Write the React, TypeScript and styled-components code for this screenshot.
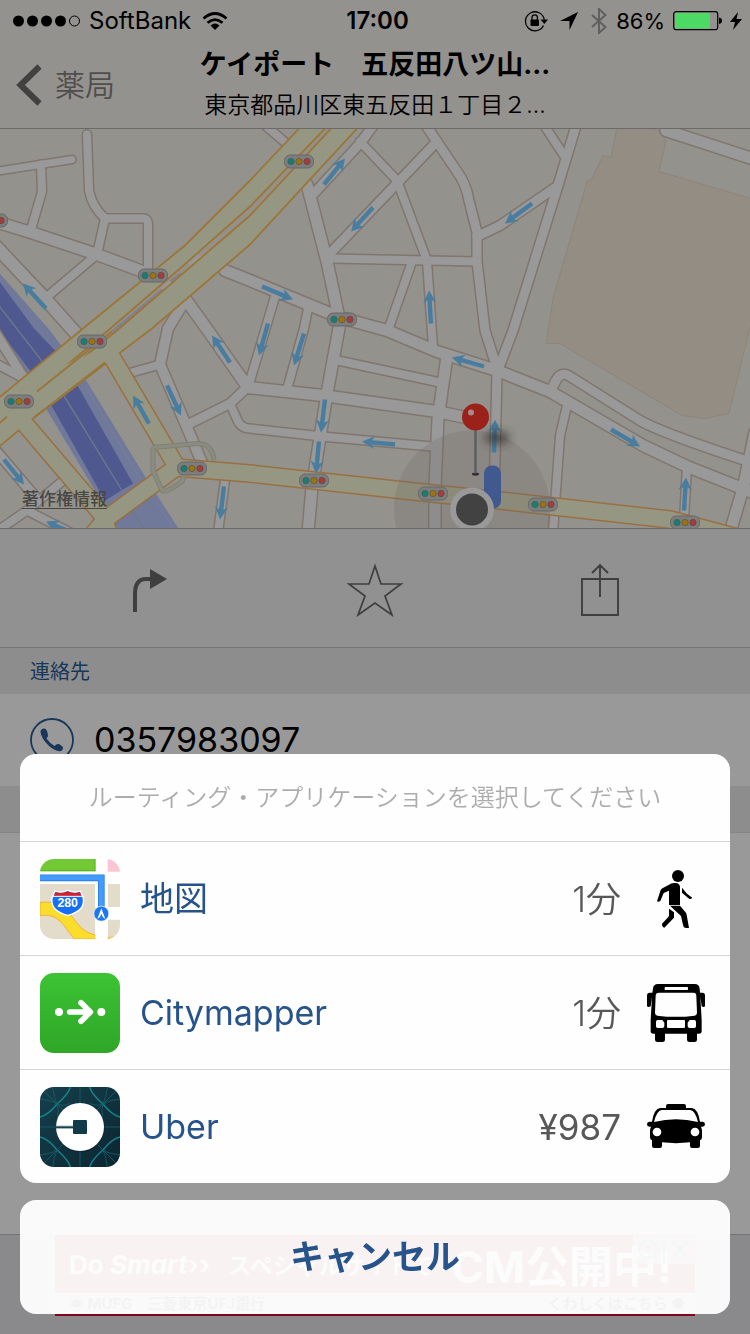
import React from 'react';
import styled, { createGlobalStyle } from 'styled-components';

const GlobalStyle = createGlobalStyle`
  *, *::before, *::after { box-sizing: border-box; }
  body {
    margin: 0;
    background: #999;
    color: #000;
    font-family: Inter, "Noto Sans CJK JP", sans-serif;
  }
  button { font: inherit; border: 0; background: none; cursor: pointer; }
  svg { display: block; }
`;

const Page = styled.div`
  min-height: 100vh;
  display: flex;
  flex-direction: column;
`;

const Header = styled.header`
  background: #94928f;
  border-bottom: 1px solid #6b6a68;
`;

const StatusBar = styled.div`
  height: 42px;
  padding: 0 8px 0 13px;
  display: grid;
  grid-template-columns: 1fr auto 1fr;
  align-items: center;
  font-size: 24px;
  line-height: 42px;
`;

const StatusGroup = styled.div<{ $end?: boolean }>`
  display: flex;
  align-items: center;
  justify-content: ${p => (p.$end ? 'flex-end' : 'flex-start')};
  gap: 8px;
`;

const BatteryLevel = styled.span`
  font-size: 22px;
`;

const Clock = styled.time`
  font-weight: 600;
`;

const NavBar = styled.div`
  height: 86px;
  padding: 0 16px;
  display: grid;
  grid-template-columns: 1fr auto 1fr;
  align-items: center;
`;

const BackButton = styled.button`
  display: flex;
  align-items: center;
  gap: 12px;
  padding: 0;
  color: #4f4e4d;
  font-size: 30px;
  line-height: 40px;
  font-weight: 350;
`;

const TitleBlock = styled.div`
  display: flex;
  flex-direction: column;
  gap: 4px;
  text-align: center;
`;

const Title = styled.h1`
  margin: 0;
  font-size: 27px;
  line-height: 36px;
  font-weight: 700;
`;

const Subtitle = styled.p`
  margin: 0;
  font-size: 23px;
  line-height: 36px;
  font-weight: 350;
`;

const MapFrame = styled.section`
  position: relative;
  height: 400px;
  border-bottom: 1px solid #6b6a68;
`;

const MapDrawing = styled.svg`
  width: 100%;
  height: 100%;
`;

const LegalLink = styled.a`
  position: absolute;
  left: 22px;
  bottom: 16px;
  color: #484744;
  font-size: 17px;
  line-height: 26px;
  font-weight: 500;
  text-underline-offset: 3px;
`;

const Toolbar = styled.nav`
  height: 119px;
  padding: 3px 5% 0;
  display: grid;
  grid-template-columns: repeat(3, 1fr);
  background: #919191;
  border-bottom: 1px solid #757575;
`;

const ToolButton = styled.button`
  display: flex;
  align-items: center;
  justify-content: center;
  padding: 0;
`;

const SectionHeader = styled.h2`
  margin: 0;
  height: 46px;
  padding: 2px 30px 0;
  background: #8d8d8d;
  color: #17365a;
  font-size: 20px;
  line-height: 44px;
  font-weight: 400;
`;

const ContactLink = styled.a`
  height: 92px;
  padding: 0 30px;
  display: flex;
  align-items: center;
  gap: 20px;
  color: #000;
  font-size: 34px;
  line-height: 44px;
  text-decoration: none;
`;

const Spacer = styled.div`
  flex: 1;
  border-top: 1px solid #858585;
`;

const AdBar = styled.footer`
  height: 100px;
  display: flex;
  justify-content: center;
  border-top: 1px solid #747478;
  background: #8a8a8c;
`;

const AdBanner = styled.a`
  position: relative;
  width: 640px;
  height: 81px;
  display: flex;
  flex-direction: column;
  border-bottom: 2px solid #80061c;
  background: #999;
  text-decoration: none;
`;

const AdHeadline = styled.span`
  height: 58px;
  padding: 0 14px;
  display: flex;
  align-items: center;
  gap: 18px;
  background: #85101a;
  color: #b8b8b8;
  font-size: 26px;
  font-weight: 700;
  white-space: nowrap;
`;

const AdJapanese = styled.span`
  font-size: 23px;
`;

const AdLarge = styled.span`
  font-size: 44px;
`;

const AdFootline = styled.span`
  flex: 1;
  padding: 0 10px 0 14px;
  display: flex;
  align-items: center;
  justify-content: space-between;
  color: #201c1c;
  font-size: 15px;
  line-height: 20px;
  font-weight: 700;
`;

const AdMarks = styled.span`
  position: absolute;
  top: 0;
  right: 0;
`;

const Sheets = styled.div`
  position: fixed;
  left: 20px;
  right: 20px;
  bottom: 20px;
  display: flex;
  flex-direction: column;
  gap: 17px;
`;

const ActionSheet = styled.section`
  overflow: hidden;
  border-radius: 16px;
  background: #fefefe;
`;

const SheetTitle = styled.h2`
  margin: 0;
  height: 87px;
  color: #acacac;
  font-size: 24px;
  line-height: 88px;
  font-weight: 350;
  text-align: center;
`;

const OptionRow = styled.button`
  width: 100%;
  height: 114px;
  padding: 0 25px 0 20px;
  display: flex;
  align-items: center;
  border-top: 1px solid #d6d6d8;
  text-align: left;
  line-height: 48px;
`;

const OptionLabel = styled.span`
  flex: 1;
  margin-left: 20px;
  color: #25538a;
  font-size: 34px;
  font-weight: 400;
`;

const OptionValue = styled.span<{ $latin?: boolean }>`
  margin-right: 26px;
  color: #585858;
  font-size: 35px;
  font-weight: ${p => (p.$latin ? 400 : 350)};
`;

const CancelButton = styled.button`
  height: 114px;
  padding: 0;
  border-radius: 16px;
  background: rgba(255, 255, 255, 0.95);
  color: #25538a;
  font-size: 34px;
  line-height: 48px;
  font-weight: 700;
`;

type Road = { d: string; w: number };

const roads: Road[] = [
  { d: 'M-5 171L72 159', w: 7 },
  { d: 'M41 164L42 191L31 229', w: 8 },
  { d: 'M87 134L89 190Q92 206 105 218L143 218Q148 218 148 224L148 270', w: 8 },
  { d: 'M-5 221L31 232L97 254L148 273', w: 11 },
  { d: 'M105 218L97 254L45 298', w: 8 },
  { d: 'M-5 245L45 298L76 333', w: 12 },
  { d: 'M-4 333L24 378', w: 9 },
  { d: 'M-4 363L24 378', w: 8 },
  { d: 'M-5 449L35 496', w: 9 },
  { d: 'M62 481L27 510L-5 532', w: 8 },
  { d: 'M27 510L70 532', w: 8 },
  { d: 'M225 270L250 280L340 317L387 330L437 351L497 370L550 391L643 445L687 466L755 493', w: 11 },
  { d: 'M185 298L208 330L248 387', w: 11 },
  { d: 'M185 300L168 328L160 364L202 462', w: 10 },
  { d: 'M160 364L128 373', w: 8 },
  { d: 'M190 423L230 403L248 386', w: 9 },
  { d: 'M230 403L238 421Q242 428 250 428L322 436L432 446', w: 8 },
  { d: 'M248 387L323 395L437 411L470 418', w: 11 },
  { d: 'M307 184L327 261L340 322L327 393L312 487L308 532', w: 11 },
  { d: 'M312 195L360 143L374 124', w: 9 },
  { d: 'M360 141L397 180L427 260L433 347', w: 8 },
  { d: 'M437 141L330 253', w: 9 },
  { d: 'M424 122L457 171Q466 183 469 200L477 232L477 261L485 330L497 368', w: 9 },
  { d: 'M330 258L477 261', w: 8 },
  { d: 'M412 261L388 330', w: 8 },
  { d: 'M477 236L500 225L557 186', w: 9 },
  { d: 'M577 122L558 185L513 330L497 372L494 500', w: 9 },
  { d: 'M541 120L564 155', w: 8 },
  { d: 'M666 130L755 159', w: 11 },
  { d: 'M262 122L290 146', w: 8 },
  { d: 'M275 296L265 330L248 387', w: 8 },
  { d: 'M308 308L304 328L287 389', w: 8 },
  { d: 'M338 360L440 382', w: 8 },
  { d: 'M447 356L438 418L435 485L435 532', w: 11 },
  { d: 'M550 391L556 380Q561 370 570 376L640 420Q665 434 755 463', w: 9 },
  { d: 'M567 405L560 435L553 532', w: 8 },
  { d: 'M687 466L684 520', w: 8 },
  { d: 'M755 432L743 488L730 532', w: 11 },
  { d: 'M225 480L218 532', w: 8 },
];

const avenues: Road[] = [
  { d: 'M108 350L176 465', w: 15 },
  { d: 'M22 420L102 514L110 536', w: 15 },
  { d: 'M84 545L105 519L176 467L250 473L423 492L500 500L670 519L760 543', w: 15 },
];

const carriageways = [
  'M300 127L326 127L250 206L180 268L108 330L37 390L-2 424L-2 398L83 328L185 245L250 180Z',
  'M332 127L358 127L250 244L152 328L33 418L-2 447L-2 424L40 392L117 330L250 215Z',
];

const arrows: [number, number, number, number][] = [
  [324, 184, 345, 158], [373, 207, 351, 231], [262, 286, 293, 299], [431, 323, 429, 290],
  [532, 203, 505, 223], [46, 308, 23, 283], [230, 362, 212, 335], [167, 385, 181, 415],
  [149, 423, 133, 395], [4, 459, 24, 484], [224, 486, 220, 519], [74, 533, 46, 521],
  [268, 323, 259, 355], [304, 333, 294, 365], [325, 399, 321, 432], [319, 441, 316, 473],
  [395, 444, 362, 441], [484, 366, 452, 357], [494, 452, 495, 419], [611, 429, 640, 446],
  [684, 510, 686, 477],
];

const signals: [number, number][] = [
  [299, 161], [153, 275], [342, 319], [92, 341], [19, 401], [192, 468],
  [314, 480], [433, 493], [543, 504], [685, 522], [-7, 220],
];

function OneWayArrow({ from }: { from: [number, number, number, number] }) {
  const [x1, y1, x2, y2] = from;
  const length = Math.hypot(x2 - x1, y2 - y1);
  const angle = (Math.atan2(y2 - y1, x2 - x1) * 180) / Math.PI;
  return (
    <path
      transform={`translate(${x2} ${y2}) rotate(${angle})`}
      d={`M${-length} -2.2H-10L-12.500 -6.500L0 0L-12.500 6.500L-10 2.200H${-length}Z`}
      fill="#487d9f"
    />
  );
}

function Signal({ x, y }: { x: number; y: number }) {
  return (
    <g transform={`translate(${x} ${y})`}>
      <rect x="-14.500" y="-6.500" width="29" height="13" rx="5.500" fill="#7d7d7d" stroke="#68696a" />
      <circle cx="-8" r="3.200" fill="#167e72" stroke="#4e5b58" strokeWidth=".7" />
      <circle r="3.200" fill="#9a7411" stroke="#5d5648" strokeWidth=".7" />
      <circle cx="8" r="3.200" fill="#a33d3c" stroke="#5d4a4a" strokeWidth=".7" />
    </g>
  );
}

function StreetMap() {
  return (
    <MapDrawing viewBox="0 128 750 400" preserveAspectRatio="xMidYMid slice" role="img" aria-label="五反田周辺の地図">
      <defs>
        <filter id="pinShadow" x="-50%" y="-50%" width="200%" height="200%">
          <feGaussianBlur stdDeviation="4" />
        </filter>
      </defs>
      <rect x="-400" y="128" width="1600" height="400" fill="#94928c" />
      <path
        d="M617 127L611 157L603 155L592 178L587 181L553 298L548 330L546 343L560 343L682 415L705 418L729 413L751 322V198L659 171L666 141L660 131L647 127Z"
        fill="#938d84"
        stroke="#8b8276"
        strokeWidth=".8"
      />
      <path d="M-2 271L50 330L85 378L145 476L181 532L120 532L46 408L-2 336Z" fill="#70799a" />
      <path d="M-2 279L34 328L57 352L78 386L133 483L105 500L52 406L30 370L-2 328Z" fill="#4f5990" />
      <path d="M-2 304L40 358L65 397L122 490M132 510L146 530" fill="none" stroke="#6e7787" strokeWidth="1.400" />
      <path d="M85 385L140 478M156 500L176 532" fill="none" stroke="#7a829c" strokeWidth=".8" />

      <g fill="none" stroke="#80766e" strokeLinejoin="round" strokeLinecap="round">
        {roads.map(r => <path key={r.d} d={r.d} strokeWidth={r.w + 3} />)}
      </g>
      <g fill="none" stroke="#99999a" strokeLinejoin="round" strokeLinecap="round">
        {roads.map(r => <path key={r.d} d={r.d} strokeWidth={r.w} />)}
      </g>

      <g fill="none" stroke="#9a6f42">
        {avenues.map(r => <path key={r.d} d={r.d} strokeWidth={r.w + 4} strokeLinejoin="round" />)}
      </g>
      <path d="M326 127L332 127L250 215L117 330L108 330L250 206Z" fill="#94908a" />
      <path d="M180 272L185 278L176 286L170 280ZM163 287L168 292L120 330L108 333Z" fill="#808091" />
      <path d="M188 263L197 254L209 259L199 268ZM160 288L169 280L179 286L171 293Z" fill="#98989a" />
      <g fill="#969782" stroke="#9b7638" strokeWidth="1.800">
        {carriageways.map(d => <path key={d} d={d} />)}
      </g>
      <g fill="none" stroke="#969782" strokeLinejoin="round">
        {avenues.map(r => <path key={r.d} d={r.d} strokeWidth={r.w + 1} />)}
      </g>
      <path d="M60 367L30 390L-2 413L-2 436L26 416L56 393L100 359L92 352Z" fill="#969782" />
      <path d="M112 331L37 391M7 416L-2 424M105 362L34 417" fill="none" stroke="#98763d" strokeWidth="2" />
      <path
        d="M153 447L198 443Q212 443 214 460M153 447L153 470L162 490Q166 493 182 481L184 476"
        fill="none"
        stroke="#7f7f75"
        strokeWidth="5"
      />
      <path
        d="M153 447L198 443Q212 443 214 460M153 447L153 470L162 490Q166 493 182 481L184 476"
        fill="none"
        stroke="#8b8c80"
        strokeWidth="3"
      />

      <circle cx="472" cy="508" r="78" fill="#6e6662" fillOpacity=".25" />
      {arrows.map(a => <OneWayArrow key={a.join()} from={a} />)}
      <rect x="484" y="465" width="17" height="43" rx="8" fill="#40598f" />
      {signals.map(([x, y]) => <Signal key={`${x},${y}`} x={x} y={y} />)}

      <ellipse cx="497" cy="437" rx="13" ry="7" fill="#333" fillOpacity=".65" filter="url(#pinShadow)" />
      <ellipse cx="475.500" cy="473.500" rx="3.500" ry="1.500" fill="#2d2d2d" />
      <path d="M475.500 428V473" stroke="#5b5d60" strokeWidth="2.400" />
      <circle cx="475.500" cy="416.500" r="13.500" fill="#9b211b" />
      <circle cx="471" cy="412" r="3" fill="#a98b89" />
      <circle cx="472" cy="509" r="22" fill="#999" />
      <circle cx="472" cy="509" r="16" fill="#424242" />
    </MapDrawing>
  );
}

function SignalDots() {
  return (
    <svg width="68" height="12" viewBox="0 0 68 12" aria-label="電波強度">
      {[5.5, 19.5, 33.5, 47.5].map(x => <circle key={x} cx={x} cy="6" r="5.500" />)}
      <circle cx="61.500" cy="6" r="5" fill="none" stroke="#000" />
    </svg>
  );
}

function WifiIcon() {
  return (
    <svg width="32" height="18" viewBox="-3 0 32 18" aria-label="Wi-Fi">
      <g fill="none" stroke="#000" strokeWidth="2.700">
        <path d="M1.500 6.500Q13 -3.500 24.500 6.500" />
        <path d="M5.500 10.800Q13 4.300 20.500 10.800" />
      </g>
      <path d="M8.500 13.400Q13 9.800 17.500 13.400L13 18Z" />
    </svg>
  );
}

function RotationLockIcon() {
  return (
    <svg width="24" height="22" viewBox="0 0 24 22" aria-label="画面の向きロック">
      <path d="M19.500 15.500A9.500 9.500 0 1 1 20.300 9.500" fill="none" stroke="#000" strokeWidth="1.300" />
      <path d="M16.500 9.500H24L20.300 14Z" />
      <rect x="6.500" y="9.500" width="8.500" height="6.500" rx=".8" />
      <path d="M8 10V7.500a2.700 2.700 0 0 1 5.400 0V10" fill="none" stroke="#000" strokeWidth="1.300" />
    </svg>
  );
}

function StatusIcons() {
  return (
    <>
      <RotationLockIcon />
      <svg width="26" height="18" viewBox="-4 0 26 18" aria-label="位置情報">
        <path d="M18 0L9.500 18V9H0Z" />
      </svg>
      <svg width="18" height="26" viewBox="0 0 18 26" aria-label="Bluetooth">
        <path d="M2 7L15.500 19L9 25V1L15.500 7L2 19" fill="none" stroke="#5f5e5c" strokeWidth="1.900" />
      </svg>
    </>
  );
}

function BatteryIcon() {
  return (
    <svg width="49" height="20" viewBox="0 0 49 20" aria-label="充電中">
      <rect x=".7" y=".7" width="44" height="18" rx="2.500" fill="none" stroke="#000" strokeWidth="1.200" />
      <rect x="2" y="2" width="35" height="15.500" rx="1" fill="#4cd964" />
      <path d="M46 6.500Q49 7 49 9.700T46 13Z" />
    </svg>
  );
}

function MapsAppIcon() {
  return (
    <svg width="80" height="80" viewBox="60 57 240 240" aria-hidden="true">
      <defs>
        <clipPath id="mapsClip"><rect x="60" y="57" width="240" height="240" rx="42" /></clipPath>
      </defs>
      <g clipPath="url(#mapsClip)">
        <rect x="60" y="57" width="240" height="240" fill="#fff" />
        <path d="M60 57H226V94H60Z" fill="#73c836" />
        <path d="M60 92H226M225 57V94" stroke="#56b51c" strokeWidth="3" />
        <path d="M263 57H300V95H263Z" fill="#fbc5d4" />
        <path d="M60 132H226V297H60ZM263 132H300V201H263ZM263 239H300V297H263Z" fill="#e3dccb" />
        <path d="M60 187C120 182 140 205 160 235C185 270 200 278 226 285V297H163C145 275 130 250 115 240C98 224 80 225 60 227Z" fill="#fbdd2b" stroke="#f5ae3b" strokeWidth="3" />
        <path d="M226 132H263V297H226Z" fill="#fff" />
        <path d="M264 293Q285 291 300 284V297H264Z" fill="#fbdd2b" stroke="#f5ae3b" strokeWidth="2" />
        <path d="M60 113.500H244V200" fill="none" stroke="#2a7ddf" strokeWidth="20" />
        <path d="M60 113.500H244V200" fill="none" stroke="#429bfd" strokeWidth="15" />
        <path d="M105 153Q124 161 143 151Q162 161 181 153Q185 165 189 170C197 204 172 219 143 226C114 219 89 204 97 170Q101 165 105 153Z" fill="#1670f5" stroke="#fff" strokeWidth="4" />
        <path d="M106 156Q124 163 143 154Q162 163 180 156L184 168H102Z" fill="#d3202f" />
        <path d="M98 169H188" stroke="#fff" strokeWidth="3" />
        <text x="143" y="202" fill="#fff" fontFamily="Liberation Sans, sans-serif" fontWeight="700" fontSize="37" textAnchor="middle">280</text>
        <circle cx="244" cy="221" r="22.500" fill="#1c77f8" stroke="#fff" strokeWidth="2" />
        <path d="M244 205L256 237L248 231L244 221L240 231L232 237Z" fill="#fff" />
      </g>
    </svg>
  );
}

function CitymapperAppIcon() {
  return (
    <svg width="80" height="80" viewBox="60 399 240 240" aria-hidden="true">
      <defs>
        <linearGradient id="cityGreen" x2="0" y2="1">
          <stop stopColor="#3cc334" />
          <stop offset="1" stopColor="#2fa627" />
        </linearGradient>
      </defs>
      <rect x="60" y="399" width="240" height="240" rx="42" fill="url(#cityGreen)" />
      <circle cx="117" cy="516" r="12" fill="#fff" />
      <circle cx="244" cy="516" r="12" fill="#fff" />
      <path d="M149 516H205M183 488L211 516L183 544" fill="none" stroke="#fff" strokeWidth="17" strokeLinecap="round" strokeLinejoin="round" />
    </svg>
  );
}

function UberAppIcon() {
  return (
    <svg width="80" height="80" viewBox="60 741 240 240" aria-hidden="true">
      <defs>
        <clipPath id="uberClip"><rect x="60" y="741" width="240" height="240" rx="42" /></clipPath>
        <linearGradient id="uberNavy" x2="1" y2="1">
          <stop stopColor="#153f4c" />
          <stop offset="1" stopColor="#0b2631" />
        </linearGradient>
      </defs>
      <g clipPath="url(#uberClip)">
        <rect x="60" y="741" width="240" height="240" fill="url(#uberNavy)" />
        <g fill="none" stroke="#14838a" strokeWidth="4.500">
          <path d="M151 741Q146 762 111 792Q85 825 60 831" />
          <path d="M209 741Q214 762 249 792Q275 825 300 831" />
          <path d="M151 981Q146 960 111 930Q85 897 60 891" />
          <path d="M209 981Q214 960 249 930Q275 897 300 891" />
        </g>
        <g fill="none" stroke="#17606a" strokeWidth="2.500">
          <path d="M60 741L130 811M300 741L230 811M60 981L130 911M300 981L230 911" />
          <path d="M98 741Q102 773 111 792Q92 780 60 778M262 741Q258 773 249 792Q268 780 300 778" />
          <path d="M98 981Q102 949 111 930Q92 942 60 944M262 981Q258 949 249 930Q268 942 300 944" />
          <path d="M111 792Q130 800 150 790M249 792Q230 800 210 790M111 792Q118 810 112 830M249 792Q242 810 248 830" />
          <path d="M180 741V981M60 861H300" />
        </g>
        <circle cx="181" cy="864" r="73" fill="#071c24" opacity=".5" />
        <circle cx="180" cy="861" r="72" fill="#fff" />
        <path d="M108 857H160V865H108Z" fill="#547781" />
        <path d="M108 861H160V865H108Z" fill="#163e4b" />
        <rect x="159" y="840" width="42" height="42" rx="3" fill="#123b49" />
      </g>
    </svg>
  );
}

function WalkIcon() {
  return (
    <svg width="58" height="58" viewBox="381 90 174 174" aria-hidden="true">
      <circle cx="474" cy="108" r="18" />
      <path d="M447 134Q453 129 462 129H467Q478 129 480 140V195H447V152L431 159L421 183Q416 187 411 184L422 150Q424 146 430 143Z" />
      <path d="M486 143L501 161L517 173Q515 177 508 177L486 158Z" />
      <path d="M450 197H480L496 216Q499 219 500 224L507 264H498Q492 264 490 259L483 228Z" />
      <path d="M447 206L462 217V233L433 263Q426 261 426 251L445 231Q448 228 447 222Z" />
    </svg>
  );
}

function BusIcon() {
  return (
    <svg width="58" height="58" viewBox="381 432 174 174" aria-hidden="true">
      <path d="M414 432H524Q538 432 539 446L540 458H549Q555 459 555 466V499Q551 503 545 499L541 470L545 540V574Q545 581 537 581H531V599Q531 606 524 606H508Q501 606 501 599V581H435V599Q435 606 428 606H412Q405 606 405 599V581H400Q392 581 392 574V540L396 470L392 499Q386 503 381 499V466Q381 459 388 458H397L399 446Q400 432 414 432Z" />
      <g fill="#fefefe">
        <rect x="434" y="441" width="70" height="9" rx="2" />
        <path d="M417 458H520Q529 458 529 467L531 518Q531 525 524 527Q468 534 412 527Q405 525 405 518L407 467Q407 458 417 458Z" />
        <path d="M413 540H427L433 548V558Q433 564 427 564H413Q408 564 408 558V546Q408 540 413 540Z" />
        <rect x="441" y="540" width="54" height="24" rx="3" />
        <path d="M509 540H523Q528 540 528 546V558Q528 564 523 564H509Q503 564 503 558V548Z" />
      </g>
    </svg>
  );
}

function TaxiIcon() {
  return (
    <svg width="58" height="58" viewBox="381 774 174 174" aria-hidden="true">
      <path d="M444 792H492Q498 792 498 798V804H515Q534 806 540 845H548Q555 846 555 853Q555 860 548 860H543Q546 866 546 874V892Q546 899 540 901V917Q540 924 534 924H516Q510 924 510 917V907Q468 912 426 907V917Q426 924 420 924H402Q396 924 396 917V901Q390 899 390 892V874Q390 866 393 860H388Q381 860 381 853Q381 846 388 845H396Q402 806 421 804H438V798Q438 792 444 792Z" />
      <path d="M425 810H511Q526 812 534 846Q468 829 402 846Q410 812 425 810Z" fill="#fefefe" />
      <circle cx="411" cy="876" r="13" fill="#fefefe" />
      <circle cx="525" cy="876" r="13" fill="#fefefe" />
    </svg>
  );
}

const options = [
  { name: '地図', value: '1分', latin: false, app: <MapsAppIcon />, mode: <WalkIcon /> },
  { name: 'Citymapper', value: '1分', latin: false, app: <CitymapperAppIcon />, mode: <BusIcon /> },
  { name: 'Uber', value: '¥987', latin: true, app: <UberAppIcon />, mode: <TaxiIcon /> },
];

export default function App() {
  return (
    <>
      <GlobalStyle />
      <Page>
        <Header>
          <StatusBar>
            <StatusGroup>
              <SignalDots />
              <span>SoftBank</span>
              <WifiIcon />
            </StatusGroup>
            <Clock>17:00</Clock>
            <StatusGroup $end>
              <StatusIcons />
              <BatteryLevel>86%</BatteryLevel>
              <BatteryIcon />
              <svg width="12" height="18" viewBox="0 0 12 18" aria-hidden="true">
                <path d="M8 0L0 10H5L3 18L12 7H6.500Z" />
              </svg>
            </StatusGroup>
          </StatusBar>
          <NavBar>
            <BackButton>
              <svg width="27" height="42" viewBox="0 0 27 42" aria-hidden="true">
                <path d="M23.500 2.500L4.500 21L23.500 39.500" fill="none" stroke="#424140" strokeWidth="6" />
              </svg>
              薬局
            </BackButton>
            <TitleBlock>
              <Title>ケイポート　五反田八ツ山...</Title>
              <Subtitle>東京都品川区東五反田１丁目２...</Subtitle>
            </TitleBlock>
          </NavBar>
        </Header>

        <MapFrame>
          <StreetMap />
          <LegalLink href="#legal">著作権情報</LegalLink>
        </MapFrame>

        <Toolbar>
          <ToolButton aria-label="経路">
            <svg width="36" height="54" viewBox="132 563 36 54">
              <path d="M135 612V594Q135 579 146 579H152" fill="none" stroke="#3f3f3f" strokeWidth="4" />
              <path d="M150 569L167 579L150 589Z" fill="#3f3f3f" />
            </svg>
          </ToolButton>
          <ToolButton aria-label="お気に入り">
            <svg width="58" height="54" viewBox="346 563 58 54">
              <path d="M375 566L381 584H401L385 596L392 615L375 603L358 615L365 596L349 584H369Z" fill="none" stroke="#3f3f3f" strokeWidth="1.700" />
            </svg>
          </ToolButton>
          <ToolButton aria-label="共有">
            <svg width="40" height="54" viewBox="580 563 40 54">
              <path d="M582 579H618V615H582ZM600 566V597M592 573L600 565L608 573" fill="none" stroke="#3f3f3f" strokeWidth="1.900" />
            </svg>
          </ToolButton>
        </Toolbar>

        <SectionHeader>連絡先</SectionHeader>
        <ContactLink href="tel:0357983097">
          <svg width="44" height="44" viewBox="0 0 44 44" aria-hidden="true">
            <circle cx="22" cy="22" r="21" fill="none" stroke="#17365a" strokeWidth="1.800" />
            <path d="M11.500 11.500Q15 9 17 13L18 17Q18 19 16.500 20.500Q20 25.500 24.500 28Q26.500 25.500 29 26L32.500 28.500Q34 31 31 33Q26 34 19 28Q11 20 10.500 14Q10.500 12 11.500 11.500Z" fill="#17365a" />
          </svg>
          0357983097
        </ContactLink>
        <SectionHeader as="div" />
        <Spacer />

        <AdBar>
          <AdBanner href="#ad">
            <AdHeadline>
              <span>Do <i>Smart</i>››</span>
              <AdJapanese>スペシャルサイトで</AdJapanese>
              <AdLarge>CM公開中!</AdLarge>
            </AdHeadline>
            <AdFootline>
              <span>◉ MUFG　三菱東京UFJ銀行</span>
              <span>くわしくはこちら ●</span>
            </AdFootline>
            <AdMarks>
              <svg width="62" height="29" viewBox="0 0 62 29" aria-hidden="true">
                <path d="M0 0H62V29H0Z" fill="#959999" opacity=".6" />
                <circle cx="15" cy="14" r="9" fill="none" stroke="#066" strokeWidth="2" />
                <path d="M15 9V19M31 0V29M39 6L55 23M55 6L39 23" stroke="#066" strokeWidth="2" />
              </svg>
            </AdMarks>
          </AdBanner>
        </AdBar>
      </Page>

      <Sheets role="dialog" aria-label="ルーティング・アプリケーションを選択してください">
        <ActionSheet>
          <SheetTitle>ルーティング・アプリケーションを選択してください</SheetTitle>
          {options.map(o => (
            <OptionRow key={o.name}>
              {o.app}
              <OptionLabel>{o.name}</OptionLabel>
              <OptionValue $latin={o.latin}>{o.value}</OptionValue>
              {o.mode}
            </OptionRow>
          ))}
        </ActionSheet>
        <CancelButton>キャンセル</CancelButton>
      </Sheets>
    </>
  );
}
